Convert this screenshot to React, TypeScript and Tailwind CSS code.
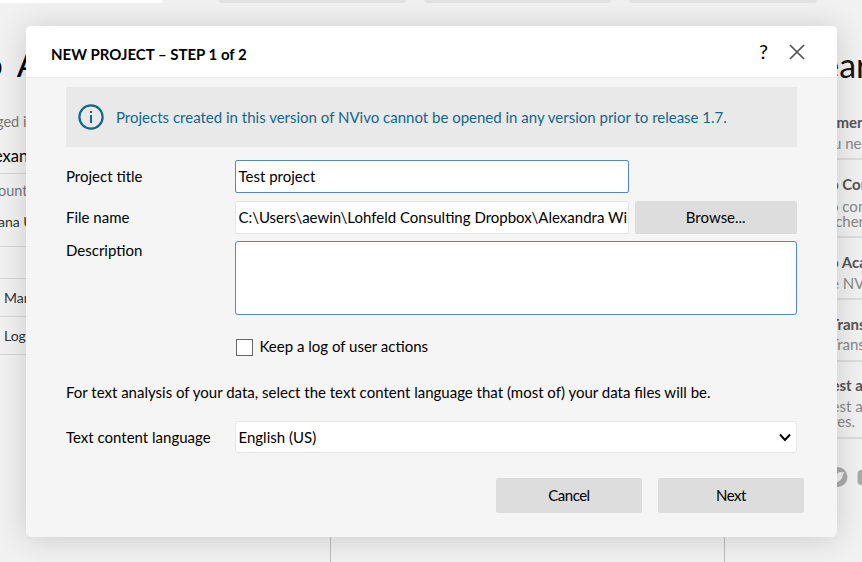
import type { ReactNode } from "react";

function Label({ children }: { children: ReactNode }) {
  return <div className="w-[169px] shrink-0 whitespace-nowrap">{children}</div>;
}

function LeftColumn() {
  return (
    <section className="w-[330px] shrink-0 overflow-hidden whitespace-nowrap text-[15px] text-[#333]">
      <div className="h-[3px] w-[163px] rounded-br bg-white" />
      <div className="mt-[36px] -ml-[17px] flex h-[48px] items-center gap-[14px] text-[35px] text-black">
        <span>o</span>
        <span>A</span>
      </div>
      <div className="mt-[25px] -ml-[4px] h-5 text-[14.5px] leading-5 text-[#777]">ged in</div>
      <div className="mt-[14px] -ml-[6px] h-5 text-[16.5px] leading-5 text-black">exan</div>
      <div className="mt-[7px] border-t border-[#d5d5d5]" />
      <div className="mt-[7px] -ml-[2px] h-5 text-[14.5px] leading-5 text-[#777]">ount</div>
      <div className="mt-[11px] -ml-[2px] h-5 text-[14px] leading-5">ana U</div>
      <div className="mt-[14px] h-[33px] border-y border-[#d5d5d5]" />
      <div className="flex h-[38px] items-center border-b border-[#d5d5d5] pl-1 text-[14px]">Man</div>
      <div className="flex h-[38px] items-center border-b border-[#d5d5d5] pl-1 text-[14px]">Log</div>
    </section>
  );
}

function RightColumn() {
  return (
    <section className="min-w-0 flex-1 overflow-hidden whitespace-nowrap pl-[105px] text-[15px] leading-[15px] text-[#888]">
      <div className="mt-[41px] -ml-[25px] h-[48px] text-[34px] leading-[48px] text-[#151515]">Learn</div>
      <div className="mt-[26px] -ml-[2px] h-[15px] font-bold text-[#555]">ument</div>
      <div className="mt-[6px] -ml-[13px] h-[15px]">you need</div>
      <div className="mt-[7px] w-[140px] border-t-2 border-[#ddd]" />
      <div className="mt-[17px] h-[15px] font-bold text-[#555]">o Com</div>
      <div className="mt-[7px] h-[15px]">o com</div>
      <div className="h-[15px]">rchers</div>
      <div className="mt-[7px] w-[140px] border-t-2 border-[#ddd]" />
      <div className="mt-[17px] h-[15px] font-bold text-[#555]">o Acad</div>
      <div className="mt-[6px] ml-[1px] h-[15px]">e NVivo</div>
      <div className="mt-[7px] w-[140px] border-t-2 border-[#ddd]" />
      <div className="mt-[17px] h-[15px] font-bold text-[#555]">Trans</div>
      <div className="mt-[5px] h-[15px]">Trans</div>
      <div className="mt-[8px] w-[140px] border-t-2 border-[#ddd]" />
      <div className="mt-[16px] ml-[1.5px] h-[15px] font-bold text-[#555]">est a</div>
      <div className="mt-[6px] ml-[1.5px] h-[15px]">est a</div>
      <div className="ml-[2px] h-[15px]">res.</div>
      <div className="mt-[8px] w-[140px] border-t-2 border-[#ddd]" />
      <svg className="mt-[27px]" width="40" height="22" viewBox="0 0 40 22">
        <circle cx="7.5" cy="11" r="10" fill="#aaa" />
        <path d="M-1 6c3 3 5 4 8 3.500 0-3 3-4.500 5-3l2.500-.5-1.700 2.500c0 6-6 9.500-11.500 8" fill="#f0f0f0" />
        <rect x="27.500" y="4" width="22" height="15" rx="4" fill="#aaa" />
      </svg>
    </section>
  );
}

function Backdrop() {
  return (
    <div className="flex h-full">
      <LeftColumn />
      <div className="mt-[40px] w-[395px] shrink-0 border-x border-[#bcbcbc]" />
      <RightColumn />
      <div className="absolute top-0 left-[219px] flex h-[3px] gap-[18px]">
        <div className="w-[187px] rounded-b bg-[#e2e2e2]" />
        <div className="w-[187px] rounded-b bg-[#e2e2e2]" />
        <div className="w-[188px] rounded-b bg-[#e2e2e2]" />
      </div>
    </div>
  );
}

export default function App() {
  return (
    <main className="relative h-[562px] w-[862px] overflow-hidden bg-[#f1f1f1] font-['Lato',sans-serif] text-[15px] text-black">
      <Backdrop />
      <div className="absolute top-[26px] left-[26px] flex h-[511px] w-[811px] flex-col overflow-hidden rounded-[5px] bg-[#f5f5f5] shadow-[0_2px_30px_rgba(0,0,0,0.16)]">
        <header className="flex h-[52px] shrink-0 items-center border-b border-[#ececec] bg-white pt-1 pr-[32px] pl-[25px]">
          <h1 className="flex-1 pt-0.5 text-[15px] font-bold">NEW PROJECT – STEP 1 of 2</h1>
          <button className="-mt-1.5 mr-[21px] text-[20px]">?</button>
          <svg className="-mt-1" width="16" height="16" viewBox="0 0 16 16" stroke="#555" strokeWidth="1.7">
            <path d="M1 1l14 14M15 1L1 15" />
          </svg>
        </header>
        <div className="flex flex-col pt-[9px] pr-[40px] pl-[40px]">
          <div className="flex h-[60px] items-center bg-[#e9e9e9] pl-3 text-[#12678e]">
            <svg width="26" height="26" viewBox="0 0 26 26" fill="none" stroke="#12678e">
              <circle cx="13" cy="13" r="11.6" strokeWidth="2.2" />
              <path d="M13 11v8M13 7v2" strokeWidth="2" />
            </svg>
            <span className="ml-3 whitespace-nowrap">
              Projects created in this version of NVivo cannot be opened in any version prior to release 1.7.
            </span>
          </div>
          <div className="mt-[13px] flex h-[33px] items-center">
            <Label>Project title</Label>
            <div className="flex h-full w-[394px] items-center rounded-[2px] border border-[#5585ca] bg-white pl-[2.5px]">Test project</div>
          </div>
          <div className="mt-2 flex h-[33px] items-center">
            <Label>File name</Label>
            <div className="flex h-[33px] w-[394px] items-center overflow-hidden rounded-[2px] border border-[#e5e5e5] bg-white pl-[2.5px]">
              <span className="w-[390px] overflow-hidden whitespace-nowrap">C:\Users\aewin\Lohfeld Consulting Dropbox\Alexandra Wi</span>
            </div>
            <button className="ml-[5.5px] h-[33px] flex-1 rounded-[2px] bg-[#ddd]">Browse...</button>
          </div>
          <div className="mt-[7px] flex h-[74px]">
            <div className="-mt-0.5">
              <Label>Description</Label>
            </div>
            <div className="h-full flex-1 rounded-[3px] border border-[#5585ca] bg-white" />
          </div>
          <div className="mt-[21px] ml-[170px] flex h-[23px] items-center">
            <div className="h-[17px] w-[17px] border border-[#666] bg-white" />
            <span className="-mt-0.5 ml-[6.5px]">Keep a log of user actions</span>
          </div>
          <p className="mt-[22px] h-[24px] whitespace-nowrap">
            For text analysis of your data, select the text content language that (most of) your data files will be.
          </p>
          <div className="mt-[16px] flex h-[32px] items-center">
            <Label>Text content language</Label>
            <div className="flex h-full flex-1 items-center justify-between rounded-[3px] border border-[#e5e5e5] bg-white pr-[5px] pl-[2.5px]">
              <span>English (US)</span>
              <svg width="12" height="9" viewBox="0 0 12 9" fill="none" stroke="black" strokeWidth="1.9">
                <path d="M1 1.5l5 5.5 5-5.5" />
              </svg>
            </div>
          </div>
        </div>
        <footer className="mt-[25px] mr-[33px] flex justify-end gap-4">
          <button className="h-[35px] w-[146px] rounded-[2px] bg-[#ddd] tracking-[-0.5px]">Cancel</button>
          <button className="h-[35px] w-[146px] rounded-[2px] bg-[#ddd] tracking-[-0.5px]">Next</button>
        </footer>
      </div>
    </main>
  );
}
